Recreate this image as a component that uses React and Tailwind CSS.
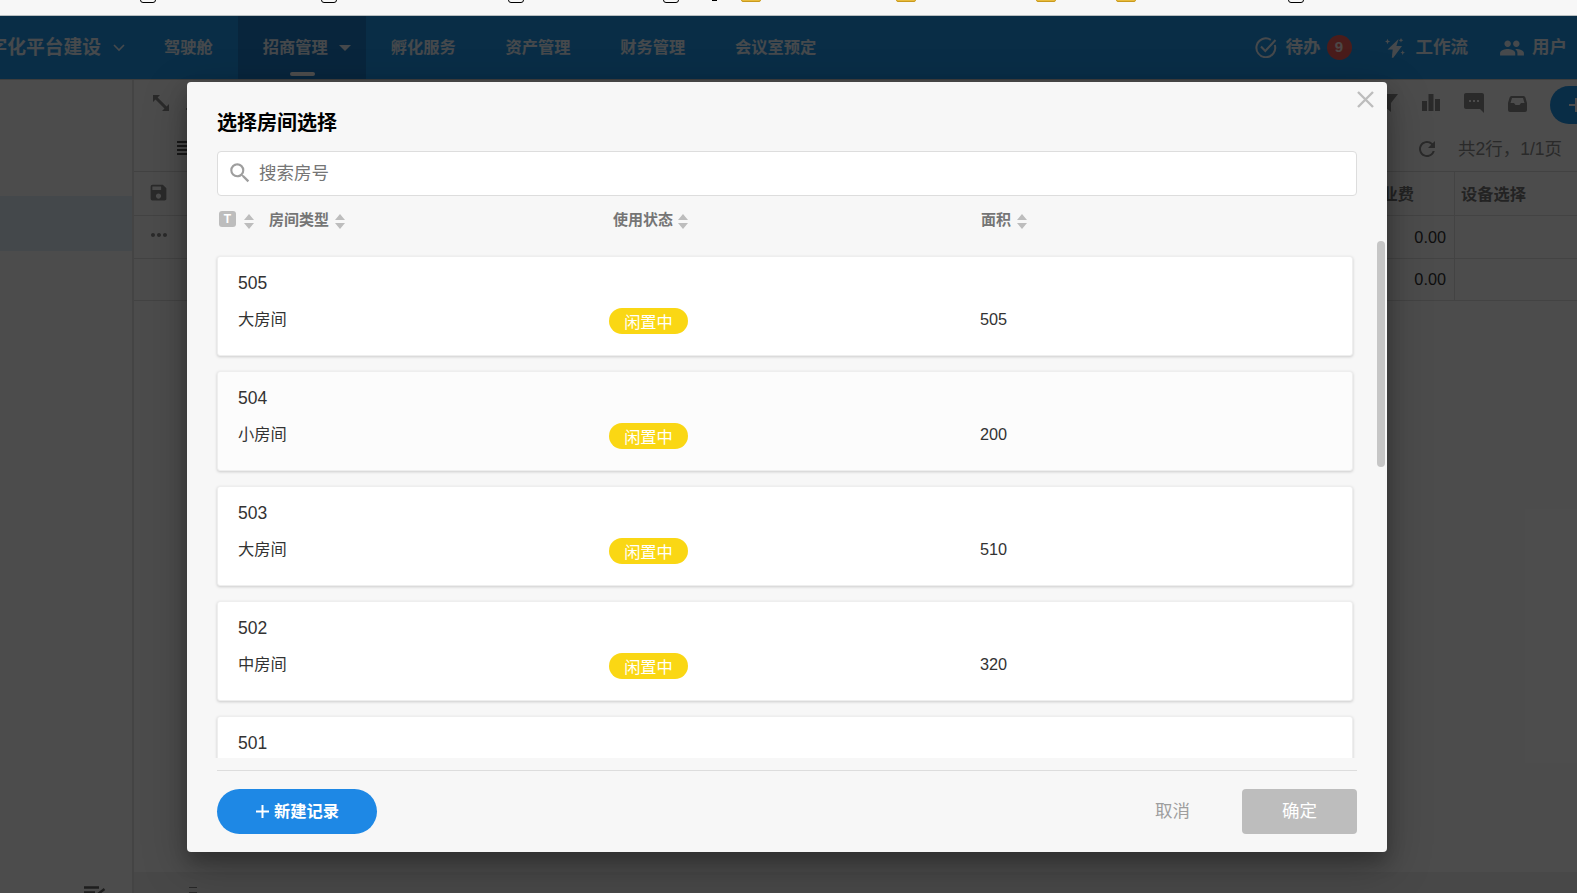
import React, { useState } from 'react';
import { MdSave, MdMoreHoriz, MdRefresh, MdSms, MdPeople, MdSearch, MdAdd } from 'react-icons/md';

const rooms = [
  { id: '505', type: '大房间', status: '闲置中', area: '505' },
  { id: '504', type: '小房间', status: '闲置中', area: '200' },
  { id: '503', type: '大房间', status: '闲置中', area: '510' },
  { id: '502', type: '中房间', status: '闲置中', area: '320' },
  { id: '501' }
];

const menus = ['孵化服务', '资产管理', '财务管理', '会议室预定'];

const PageMark = ({ className }) => (
  <span className={`h-[9px] w-4 shrink-0 -mt-1.5 rounded-[3px] border-[1.5px] border-black ${className}`} />
);

const FolderMark = ({ className }) => (
  <span className={`h-2 w-5 shrink-0 -mt-1.5 rounded-[2px] border border-[#c99a1e] bg-[#e8bb3c] ${className}`} />
);

// Bottom edge of the browser's bookmark bar
const BookmarkBar = () => (
  <div className="flex h-4 items-start overflow-hidden border-b border-[#b9bfc1] bg-[#f7f7f7]">
    <PageMark className="ml-[140px]" />
    <PageMark className="ml-[165px]" />
    <PageMark className="ml-[171px]" />
    <PageMark className="ml-[139px]" />
    <span className="ml-[33px] h-px w-[5px] bg-black" />
    <FolderMark className="ml-6" />
    <FolderMark className="ml-[135px]" />
    <FolderMark className="ml-[120px]" />
    <FolderMark className="ml-[60px]" />
    <PageMark className="ml-[152px]" />
  </div>
);

const Navbar = () => (
  <header className="flex h-[63px] items-center bg-[#2196ea] text-[16.25px] font-bold text-white/90">
    <div className="flex w-[101px] shrink-0 justify-end overflow-hidden pt-px text-[18.75px] whitespace-nowrap">字化平台建设</div>
    <svg className="ml-3 h-2 w-3 shrink-0" viewBox="0 0 12 8" fill="none" stroke="currentColor" strokeWidth="1.6">
      <path d="M1 1l5 5 5-5" />
    </svg>
    <nav className="ml-[13px] flex h-full">
      <span className="flex items-center pr-[25px] pl-[26px]">驾驶舱</span>
      <span className="relative flex w-32 items-center bg-[#1c7cc8] pl-[25px]">
        招商管理
        <svg className="ml-[11px] h-1.5 w-3" viewBox="0 0 12 6" fill="currentColor">
          <path d="M0 0h12L6 6z" />
        </svg>
        <span className="absolute bottom-[3px] left-[52px] h-1 w-[25px] rounded-sm bg-white" />
      </span>
      {menus.map(name => (
        <span key={name} className="flex items-center px-[24.9px]">{name}</span>
      ))}
    </nav>
    <div className="ml-auto flex shrink-0 items-center pr-[10px] text-[17.5px] whitespace-nowrap">
      <svg className="h-[21px] w-[22px]" viewBox="0 0 22 21" fill="none" stroke="currentColor" strokeWidth="2">
        <path d="M19.8 8a9.4 9.4 0 1 1-4-5.2" />
        <path d="M6 9.5l4.3 4.5L20.5 3" />
      </svg>
      <span className="ml-[9px]">待办</span>
      <span className="ml-[6px] flex h-[25px] w-[25px] items-center justify-center rounded-full bg-[#f8605c] text-[15px]">9</span>
      <svg className="ml-[33px] h-5 w-5" viewBox="0 0 20 20" fill="currentColor">
        <path d="M13.600 1L2.600 11.400h5.100L6.800 19.800h1.500L17 8.100h-5.600z" />
        <path d="M2.500.8l.8 1.900 1.900.8-1.900.8-.8 1.900-.8-1.900-1.900-.8 1.900-.8zM16 0l.7 1.600 1.600.7-1.600.7-.7 1.600-.7-1.600-1.600-.7 1.600-.7zM17.700 12.300l.7 1.600 1.600.7-1.600.7-.7 1.600-.7-1.600-1.600-.7 1.600-.7z" />
      </svg>
      <span className="ml-[11px]">工作流</span>
      <MdPeople className="ml-[31px] h-[26px] w-[26px]" />
      <span className="ml-[7px]">用户</span>
    </div>
  </header>
);

const Toolbar = () => (
  <div className="flex h-[93px] shrink-0 justify-between border-b border-[#dcdcdc] text-[#8c8c8c]">
    <div>
      <div className="flex items-start pt-4 pl-[19px]">
        <svg className="h-4 w-4" viewBox="0 0 16 16" fill="currentColor">
          <path d="M0 0h7L4.600 2.400l9 9L16 9v7H9l2.500-2.500-9-9L0 7z" />
        </svg>
        <span className="mt-[13px] ml-[17px] h-[2px] w-4 bg-current" />
      </div>
      <div className="mt-[30px] ml-[43px] flex w-5 flex-col gap-0.5">
        <span className="h-[2px] bg-[#555]" />
        <span className="h-[2px] bg-[#555]" />
        <span className="h-[2px] bg-[#555]" />
        <span className="h-[2px] bg-[#555]" />
      </div>
    </div>
    <div className="flex w-[203px] flex-col">
      <div className="flex h-[52px] items-start pt-[7px]">
        <svg className="mt-2 ml-1 h-[18px] w-5 shrink-0" viewBox="0 0 20 18" fill="currentColor">
          <path d="M0 0h20l-7 9v9l-6-5V9z" />
        </svg>
        <svg className="mt-2 ml-6 h-[17px] w-[18px] shrink-0" viewBox="0 0 18 17" fill="currentColor">
          <path d="M0 7h5v10H0zM6.500 0h5v17h-5zM13 5h5v12h-5z" />
        </svg>
        <MdSms className="mt-[5px] ml-[22px] h-6 w-6 shrink-0 -scale-x-100" />
        <svg className="mt-[10px] ml-[22px] h-4 w-[19px] shrink-0" viewBox="0 0 19 16" fill="currentColor" fillRule="evenodd">
          <path d="M3.500 0h12Q17 0 17.400 1.500L19 7v7q0 2-2 2H2q-2 0-2-2V7l1.600-5.500Q2 0 3.500 0zM4 2L2.500 7H6l1.500 2h4L13 7h3.500L15 2z" />
        </svg>
        <span className="ml-[23px] flex h-[38px] w-[27px] shrink-0 items-center overflow-hidden rounded-l-full bg-[#2196ea] pl-[14px] text-white">
          <MdAdd className="h-6 w-6 shrink-0" />
        </span>
      </div>
      <div className="flex items-center pl-[41px] text-[17.5px] leading-9 whitespace-nowrap">
        <MdRefresh className="h-6 w-6" />
        <span className="ml-[19px]">共2行，1/1页</span>
      </div>
    </div>
  </div>
);

const Grid = () => (
  <div className="text-[16.25px] text-[#333]">
    <div className="flex h-[44px] items-center border-b border-[#e0e0e0] font-bold text-[#777]">
      <MdSave className="-mt-0.5 ml-[14px] h-[21px] w-[21px] text-[#8c8c8c]" />
      <span className="mt-0.5 ml-auto">物业费</span>
      <span className="ml-10 flex h-full w-[123px] items-center border-l border-[#e0e0e0] pt-0.5 pl-1.5">设备选择</span>
    </div>
    <div className="flex h-[43px] items-center border-b border-[#e0e0e0]">
      <MdMoreHoriz className="ml-[13px] -mt-1 h-6 w-6 text-[#8c8c8c]" />
      <span className="ml-auto">0.00</span>
      <span className="ml-2 h-full w-[123px] border-l border-[#e0e0e0]" />
    </div>
    <div className="flex h-[42px] items-center border-b border-[#e0e0e0]">
      <span className="ml-auto">0.00</span>
      <span className="ml-2 h-full w-[123px] border-l border-[#e0e0e0]" />
    </div>
  </div>
);

const SortIcon = () => (
  <svg className="mt-[3px] h-[15px] w-2.5" viewBox="0 0 10 15" fill="#bdbdbd">
    <path d="M0 6l5-6 5 6zM0 9h10l-5 6z" />
  </svg>
);

const RoomCard = ({ room, active }) => (
  <div className={`h-[100px] shrink-0 rounded-[3px] border border-[#eee] px-5 pt-[14px] shadow-[0_1px_3px_rgba(0,0,0,0.18)] ${active ? 'bg-[#fcfcfc]' : 'bg-white'}`}>
    <div className="h-6 text-[17.5px] leading-6">{room.id}</div>
    {room.status && (
      <div className="mt-[11px] flex items-start text-[16.25px] leading-[26px]">
        <span className="w-[371px]">{room.type}</span>
        <span className="w-[371px]">
          <span className="mt-[2px] flex h-[26px] w-[79px] items-center justify-center rounded-full bg-[#fad714] pt-px text-white">
            {room.status}
          </span>
        </span>
        <span>{room.area}</span>
      </div>
    )}
  </div>
);

const RoomDialog = () => {
  const [keyword, setKeyword] = useState('');

  return (
    <div className="absolute top-[66px] left-[187px] flex h-[770px] w-[1200px] flex-col rounded bg-[#f7f7f7] px-[30px] shadow-[0_14px_45px_rgba(0,0,0,0.25),0_10px_18px_rgba(0,0,0,0.22)]">
      <svg className="absolute top-[9px] right-[13px] h-[17px] w-[17px]" viewBox="0 0 17 17" stroke="#bdbdbd" strokeWidth="2.4">
        <path d="M1 1l15 15M16 1L1 16" />
      </svg>
      <h2 className="mt-[26px] text-[20px] leading-[30px] font-bold text-black">选择房间选择</h2>
      <label className="mt-[13px] flex h-[45px] shrink-0 items-center rounded border border-[#ddd] bg-white pl-[9px]">
        <MdSearch className="-mt-0.5 h-[26px] w-[26px] shrink-0 text-[#9e9e9e]" />
        <input
          value={keyword}
          onChange={e => setKeyword(e.target.value)}
          placeholder="搜索房号"
          className="ml-1.5 w-full text-[17.5px] outline-none placeholder:text-[#757575]"
        />
      </label>
      <div className="mt-[10px] flex h-[28px] shrink-0 items-center text-[15px] font-bold text-[#757575]">
        <div className="flex w-[396px] items-center">
          <span className="-mt-0.5 ml-[2px] flex h-4 w-[17px] items-center justify-center rounded-[3px] bg-[#bdbdbd] text-[12px] text-white">T</span>
          <span className="ml-2"><SortIcon /></span>
          <span className="mr-1.5 ml-[15px]">房间类型</span>
          <SortIcon />
        </div>
        <div className="flex w-[368px] items-center gap-[5px]">使用状态<SortIcon /></div>
        <div className="flex items-center gap-1.5">面积<SortIcon /></div>
      </div>
      <div className="relative -mx-[30px] flex h-[524px] shrink-0 flex-col gap-[15px] overflow-hidden pt-[22px] pr-[34px] pl-[30px] text-[#333]">
        {rooms.map(room => (
          <RoomCard key={room.id} room={room} active={room.id === '504'} />
        ))}
        <span className="absolute top-[7px] right-[2px] h-[226px] w-2 rounded-full bg-[#c6c6c6]" />
      </div>
      <div className="mt-3 flex items-center border-t border-[#ddd] pt-[18px]">
        <button className="flex h-[45px] w-40 items-center justify-center rounded-full bg-[#1e88e5] pl-px text-[16.25px] font-bold text-white">
          <svg className="mr-[5px] h-[13px] w-[13px]" viewBox="0 0 13 13" stroke="currentColor" strokeWidth="2">
            <path d="M6.500 0v13M0 6.500h13" />
          </svg>
          新建记录
        </button>
        <button className="ml-auto text-[17.5px] text-[#9e9e9e]">取消</button>
        <button className="ml-[52px] h-[45px] w-[115px] rounded bg-[#bdbdbd] text-[17.5px] text-white">确定</button>
      </div>
    </div>
  );
};

export default function App() {
  return (
    <div className="h-[893px] w-[1577px] overflow-hidden bg-white font-['Liberation_Sans','Noto_Sans_CJK_SC',sans-serif]">
      <BookmarkBar />
      <div className="relative h-[877px] overflow-hidden">
        <Navbar />
        <div className="flex h-[814px] border-t border-[#d0d0d0]">
          <aside className="flex w-[134px] shrink-0 flex-col border-r-2 border-[#e4e4e4]">
            <div className="mt-[116px] h-[55px] bg-[#e3f2fa]" />
            <svg className="mt-auto ml-[84px] h-[7px] w-[22px]" viewBox="0 0 22 7" fill="none" stroke="#666" strokeWidth="2.5">
              <path d="M0 1.500h15M0 6.500h11M14 8l6.500-5" />
            </svg>
          </aside>
          <main className="-mt-px flex grow flex-col">
            <Toolbar />
            <Grid />
            <div className="mt-auto h-[21px] bg-[#f2f2f2] pt-[15px] pl-[55px]">
              <div className="h-[6px] w-2 border-y border-[#888]" />
            </div>
          </main>
        </div>
        <div className="absolute inset-0 bg-black/70" />
        <RoomDialog />
      </div>
    </div>
  );
}
